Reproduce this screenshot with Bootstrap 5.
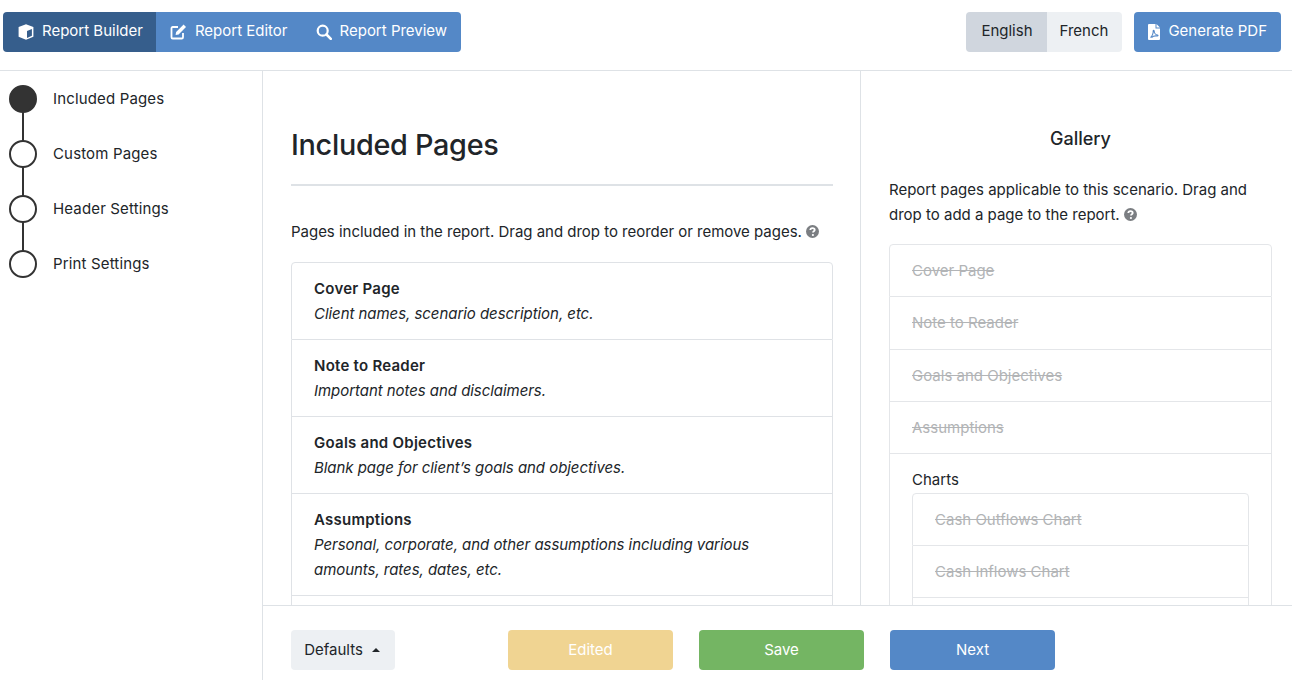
<!DOCTYPE html>
<html lang="en">
<head>
<meta charset="utf-8">
<title>Report Builder</title>
<link href="https://cdn.jsdelivr.net/npm/bootstrap@5.3.0/dist/css/bootstrap.min.css" rel="stylesheet">
<style>
html,body{height:100%;overflow:hidden}
body{font-family:Inter,"Noto Sans",sans-serif;font-size:15px;color:#212529}
.appshell{height:680px;width:1292px;display:flex;flex-direction:column}
.topbar{height:71px;flex:none;border-bottom:1px solid #dee2e6;padding:11.5px 11px 0 3px;display:flex;justify-content:space-between;align-items:flex-start}
.topbar .btn,.footbar .btn{font-size:15px;height:40px;display:inline-flex;align-items:center;justify-content:center;border:0;border-radius:4px}
.btn-blue{background:#5488c7;color:#fff}
.btn-blue:hover{background:#5488c7;color:#fff}
.btn-blue.on{background:#365e8c;color:#fff}
.btn-lite{background:#edf0f3;color:#212529}
.btn-lite.on{background:#d0d6de}
.nav1{padding:0 14px 0 15px;gap:8px}
.topbar .nav2{padding:0 14px}
.topbar .nav3{padding-right:14px}
.topbar .pdfbtn{padding:0 14px}
.topbar .langen{padding:0 15px}
.topbar .langfr{padding:0 14px 0 13px}
.tabgroup .btn{border-radius:0}
.tabgroup .btn:first-child{border-radius:4px 0 0 4px}
.tabgroup .btn:last-child{border-radius:0 4px 4px 0}
.bodyrow{flex:1;min-height:0;display:flex}
.stepper{width:263px;flex:none;border-right:1px solid #dee2e6;padding-top:14px;position:relative}
.stepitem{height:55px;display:flex;align-items:flex-start;padding-left:9px;position:relative;color:#212529}
.stepdot{width:28px;height:28px;border-radius:50%;border:2px solid #333;background:#fff;flex:none;position:relative;z-index:1}
.stepdot.done{background:#333}
.steplabel{margin-left:16px;line-height:28px;letter-spacing:.15px}
.stepitem:not(:last-child)::after{content:"";position:absolute;left:22px;top:27px;width:2px;height:29px;background:#333}
.maincol{flex:1;min-width:0;display:flex;flex-direction:column}
.panes{flex:1;min-height:0;display:flex;overflow:hidden}
.leftpane{width:598px;flex:none;border-right:1px solid #dee2e6;padding:53.500px 27px 0 28px;overflow:hidden}
.rightpane{flex:1;padding:0 20px 0 28px;overflow:hidden}
.pagetitle{font-size:28.800px;font-weight:500;line-height:40px;margin:0;letter-spacing:-.01em}
.rule{height:2px;background:#dee2e6;margin:19.500px 0 33px}
.intro{line-height:25px;margin:0 0 18px}
.leftpane .intro{letter-spacing:-.02px}
.helpicon{display:inline-block;vertical-align:-1px}
.pagelist{--bs-list-group-border-color:#dfe2e6;--bs-list-group-border-radius:4px}
.pagelist .list-group-item{padding:13px 22px 13px 22px;line-height:25px}
.itemhead{font-weight:600;letter-spacing:.25px}
.itemdesc{font-style:italic;letter-spacing:-.05px}
.blankrow{height:51px}
.gallerytitle{font-size:18px;font-weight:500;text-align:center;line-height:25px;margin:54.500px 0 26px}
.gallerylist{--bs-list-group-border-color:#e4e6e9;--bs-list-group-border-radius:4px}
.gallerylist .list-group-item{padding:13px 22px;line-height:25px;height:52.330px}
.outerlist>.list-group-item:first-child{height:53.200px}
.outerlist{margin-top:-.5px}
.gallerylist .list-group-item.groupwrap{height:auto;padding:13px 22px 0;border-bottom:0}
.struck{color:#b2b4b6;text-decoration:line-through}
.groupname{line-height:25px;margin-bottom:1px}
.footbar{height:75px;flex:none;border-top:1px solid #dee2e6;padding:24px 0 0 28px;display:flex;background:#fff}
.footbar .dropbtn{width:104px;padding:0 13px 0 11px}
.footbar .dropbtn::after{margin-left:9px}
.actionbtn{width:165px}
.footbar .actionbtn{color:#fff}
.btn-edited{background:#f0d492;margin-left:113px}
.btn-edited:disabled{background:#f0d492;opacity:1;color:#fff}
.btn-save{background:#74b563;margin-left:26px}
.btn-save:hover{background:#74b563}
.btn-next{margin-left:26px}
</style>
</head>
<body>
<div class="appshell">
  <header class="topbar">
    <div class="btn-group tabgroup" role="group">
      <button type="button" class="btn btn-blue on nav1">
        <svg width="16" height="16" viewBox="0 0 16 16"><path fill="#fff" d="M8 .2 15.400 3v9.800L8 15.800.6 12.800V3z"/><path fill="#365e8c" d="M9 7v6.900l4.900-2.100V4.900zM8 5.600 2.800 3.500l-.1-.1.1.1L8 5.600z"/></svg>Report Builder</button>
      <button type="button" class="btn btn-blue nav1 nav2">
        <svg width="17" height="16" viewBox="0 0 17 16" fill="none"><path d="M13 9v4.200c0 .7-.5 1.300-1.200 1.300H2.700c-.7 0-1.200-.6-1.200-1.300V4.200c0-.7.5-1.200 1.200-1.200H8" stroke="#fff" stroke-width="1.800"/><path d="M13.600.6 16 3l-7.400 7.500-3 .5.500-3z" fill="#fff"/></svg>Report Editor</button>
      <button type="button" class="btn btn-blue nav1 nav3">
        <svg width="16" height="16" viewBox="0 0 16 16" fill="none" stroke="#fff"><circle cx="6.700" cy="6.700" r="5" stroke-width="2.200"/><path d="m10.500 10.500 4.300 4.300" stroke-width="2.600" stroke-linecap="round"/></svg>Report Preview</button>
    </div>
    <div class="d-flex">
      <div class="btn-group tabgroup me-2" role="group">
        <button type="button" class="btn btn-lite on langen">English</button>
        <button type="button" class="btn btn-lite langfr">French</button>
      </div>
      <button type="button" class="btn btn-blue ms-1 nav1 pdfbtn">
        <svg width="12" height="16" viewBox="0 0 12 16"><path fill="#fff" d="M1 0h6.500v4.500H12V15a1 1 0 0 1-1 1H1a1 1 0 0 1-1-1V1a1 1 0 0 1 1-1zM8.500 0 12 3.500H8.500z"/><path fill="none" stroke="#5488c7" stroke-width="1.100" d="M2.500 13.500c1.500-1 3-4.500 2.700-6.500-.2-1 1-1 1 .2 0 1.500 1.500 3.500 3.300 3.800.8.200.6 1.100-.3 1-1.700-.3-4.200.2-5.700 1.500"/></svg>Generate PDF</button>
    </div>
  </header>
  <div class="bodyrow">
    <nav class="stepper">
      <div class="stepitem"><span class="stepdot done"></span><span class="steplabel">Included Pages</span></div>
      <div class="stepitem"><span class="stepdot"></span><span class="steplabel">Custom Pages</span></div>
      <div class="stepitem"><span class="stepdot"></span><span class="steplabel">Header Settings</span></div>
      <div class="stepitem"><span class="stepdot"></span><span class="steplabel">Print Settings</span></div>
    </nav>
    <div class="maincol">
      <div class="panes">
        <section class="leftpane">
          <h1 class="pagetitle">Included Pages</h1>
          <div class="rule"></div>
          <p class="intro">Pages included in the report. Drag and drop to reorder or remove pages. <svg class="helpicon" width="13" height="13" viewBox="0 0 13 13"><circle cx="6.500" cy="6.500" r="6.500" fill="#7b7e82"/><path d="M4.300 5.100c0-1.300 1-2 2.200-2s2.200.7 2.200 1.800c0 1.400-1.700 1.400-1.700 2.700" fill="none" stroke="#fff" stroke-width="1.800"/><circle cx="6.900" cy="10" r="1.100" fill="#fff"/></svg></p>
          <div class="list-group pagelist">
            <div class="list-group-item"><div class="itemhead">Cover Page</div><div class="itemdesc">Client names, scenario description, etc.</div></div>
            <div class="list-group-item"><div class="itemhead">Note to Reader</div><div class="itemdesc">Important notes and disclaimers.</div></div>
            <div class="list-group-item"><div class="itemhead">Goals and Objectives</div><div class="itemdesc">Blank page for client’s goals and objectives.</div></div>
            <div class="list-group-item"><div class="itemhead">Assumptions</div><div class="itemdesc">Personal, corporate, and other assumptions including various amounts, rates, dates, etc.</div></div>
            <div class="list-group-item blankrow"></div>
          </div>
        </section>
        <aside class="rightpane">
          <h2 class="gallerytitle">Gallery</h2>
          <p class="intro">Report pages applicable to this scenario. Drag and drop to add a page to the report. <svg class="helpicon" width="13" height="13" viewBox="0 0 13 13"><circle cx="6.500" cy="6.500" r="6.500" fill="#7b7e82"/><path d="M4.300 5.100c0-1.300 1-2 2.200-2s2.200.7 2.200 1.800c0 1.400-1.700 1.400-1.700 2.700" fill="none" stroke="#fff" stroke-width="1.800"/><circle cx="6.900" cy="10" r="1.100" fill="#fff"/></svg></p>
          <div class="list-group gallerylist outerlist">
            <div class="list-group-item struck">Cover Page</div>
            <div class="list-group-item struck">Note to Reader</div>
            <div class="list-group-item struck">Goals and Objectives</div>
            <div class="list-group-item struck">Assumptions</div>
            <div class="list-group-item groupwrap">
              <div class="groupname">Charts</div>
              <div class="list-group gallerylist">
                <div class="list-group-item struck">Cash Outflows Chart</div>
                <div class="list-group-item struck">Cash Inflows Chart</div>
                <div class="list-group-item"></div>
              </div>
            </div>
          </div>
        </aside>
      </div>
      <footer class="footbar">
        <div class="dropup">
          <button type="button" class="btn btn-lite dropdown-toggle dropbtn" data-bs-toggle="dropdown">Defaults</button>
        </div>
        <button type="button" class="btn actionbtn btn-edited" disabled>Edited</button>
        <button type="button" class="btn actionbtn btn-save">Save</button>
        <button type="button" class="btn actionbtn btn-blue btn-next">Next</button>
      </footer>
    </div>
  </div>
</div>
</body>
</html>
